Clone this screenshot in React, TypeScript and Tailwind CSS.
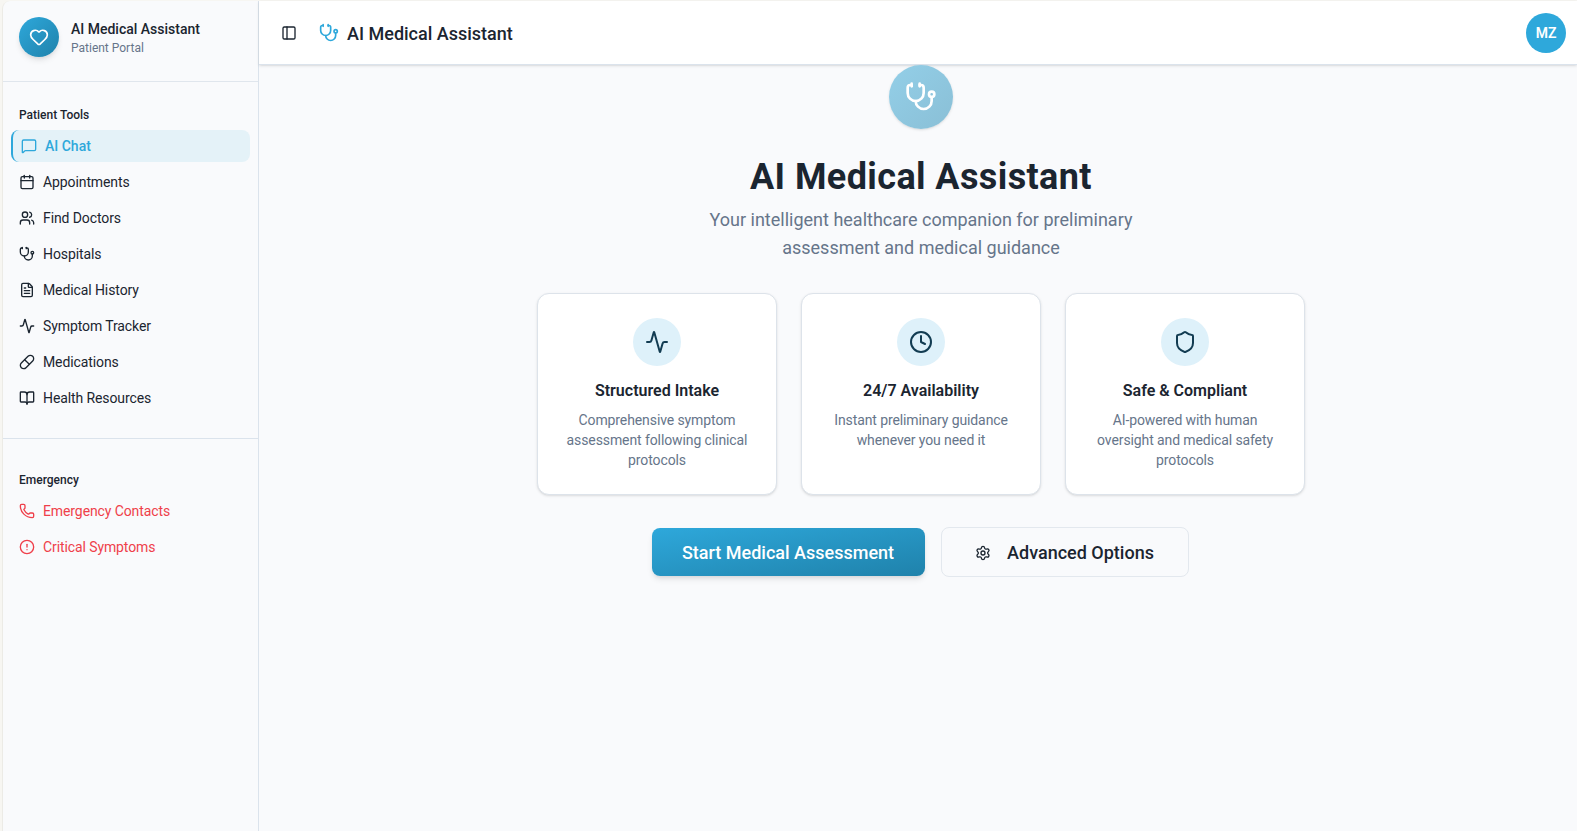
import React from "react"
import { Activity, BookOpen, Calendar, CircleAlert, Clock, FileText, Heart, MessageSquare, PanelLeft, Phone, Pill, Settings, Shield, Stethoscope, Users } from "lucide-react"

const tools = [
    { label: "Appointments", icon: Calendar },
    { label: "Find Doctors", icon: Users },
    { label: "Hospitals", icon: Stethoscope },
    { label: "Medical History", icon: FileText },
    { label: "Symptom Tracker", icon: Activity },
    { label: "Medications", icon: Pill },
    { label: "Health Resources", icon: BookOpen },
]

const emergency = [
    { label: "Emergency Contacts", icon: Phone },
    { label: "Critical Symptoms", icon: CircleAlert },
]

const features = [
    { title: "Structured Intake", text: "Comprehensive symptom assessment following clinical protocols", icon: Activity },
    { title: "24/7 Availability", text: "Instant preliminary guidance whenever you need it", icon: Clock },
    { title: "Safe & Compliant", text: "AI-powered with human oversight and medical safety protocols", icon: Shield },
]

const Sidebar = () => (
    <aside className="w-[257px] shrink-0 flex flex-col border-r border-[#dbe3ec] bg-[#f9fafc] border-l border-l-[#ecebe6] rounded-tl-lg">
        <div className="h-[81px] flex items-start gap-3 px-4 pt-4 border-b border-[#e0e6ed] shrink-0">
            <div className="w-10 h-10 rounded-full bg-gradient-to-br from-[#2ea8db] to-[#1f82ab] flex items-center justify-center shadow-md">
                <Heart size={20} className="text-white" />
            </div>
            <div className="pt-0.5">
                <p className="text-sm font-medium leading-5 text-[#1b2530]">AI Medical Assistant</p>
                <p className="mt-px text-xs leading-4 text-[#66758a]">Patient Portal</p>
            </div>
        </div>
        <div className="px-2 pt-[17px] h-[357px] border-b border-[#dbe3ec] shrink-0">
            <p className="h-[31px] px-2 flex items-center text-xs font-medium text-[#1b2530]">Patient Tools</p>
            <div className="flex flex-col gap-1">
                <a className="h-8 flex items-center gap-2 pl-2 rounded-lg border-l-2 border-[#2ea8db] bg-[#e4f2f8] text-sm font-medium text-[#2ea8db]">
                    <MessageSquare size={16} />
                    AI Chat
                </a>
                {tools.map((item) => (
                    <a key={item.label} className="h-8 flex items-center gap-2 px-2 text-sm tracking-[-0.1px] text-[#1b2530]">
                        <item.icon size={16} />
                        {item.label}
                    </a>
                ))}
            </div>
        </div>
        <div className="px-2 pt-[25px]">
            <p className="h-[31px] px-2 flex items-center text-xs font-medium text-[#1b2530]">Emergency</p>
            <div className="flex flex-col gap-1">
                {emergency.map((item) => (
                    <a key={item.label} className="h-8 flex items-center gap-2 px-2 text-sm tracking-[-0.1px] text-[#ef3f4a]">
                        <item.icon size={16} />
                        {item.label}
                    </a>
                ))}
            </div>
        </div>
    </aside>
)

const App = () => {
    return (
        <div className="h-screen flex overflow-hidden bg-[#f7f6f2] pl-[2px] pt-px text-[#1b2530] font-['Roboto',sans-serif]">
            <Sidebar />
            <div className="flex-1 flex flex-col min-w-0 bg-[#f9fafc]">
                <header className="h-[64px] shrink-0 flex items-center gap-4 px-[22px] bg-white border-b border-[#dbe3ec] shadow-sm">
                    <PanelLeft size={16} />
                    <div className="flex items-center gap-2 ml-[6px]">
                        <Stethoscope size={20} className="text-[#2ea8db]" />
                        <h2 className="pt-0.5 text-lg font-medium">AI Medical Assistant</h2>
                    </div>
                    <div className="ml-auto -mr-[11px] w-10 h-10 rounded-full bg-[#2ea8db] flex items-center justify-center text-sm font-semibold text-white">MZ</div>
                </header>
                <main className="flex-1 flex flex-col items-center pl-[6px]">
                    <div className="w-16 h-16 rounded-full bg-gradient-to-br from-[#93cfe8] to-[#8abfd6] flex items-center justify-center shadow-sm">
                        <Stethoscope size={32} className="text-white" />
                    </div>
                    <h1 className="mt-[28px] text-4xl font-bold leading-10 tracking-[0.4px] text-[#1b2530]">AI Medical Assistant</h1>
                    <p className="mt-[9px] max-w-[448px] text-center text-lg leading-7 text-[#66758a]">Your intelligent healthcare companion for preliminary assessment and medical guidance</p>
                    <div className="mt-[31px] grid grid-cols-3 gap-6 w-[768px]">
                        {features.map((f) => (
                            <div key={f.title} className="flex flex-col items-center p-6 rounded-xl border border-[#dde3ea] bg-white shadow-sm text-center">
                                <div className="w-12 h-12 rounded-full bg-[#def1fa] flex items-center justify-center text-[#123c52]">
                                    <f.icon size={24} />
                                </div>
                                <h3 className="mt-[13px] font-semibold leading-6">{f.title}</h3>
                                <p className="mt-[7px] text-sm leading-5 tracking-[-0.1px] text-[#66758a]">{f.text}</p>
                            </div>
                        ))}
                    </div>
                    <div className="mt-8 mr-[2px] flex items-center gap-4">
                        <button className="h-12 w-[273px] pt-px rounded-lg bg-gradient-to-br from-[#2ea8db] to-[#1f82ab] text-lg font-medium text-white shadow-md">Start Medical Assessment</button>
                        <button className="h-[50px] w-[248px] pt-px rounded-lg border border-[#e3e8ee] bg-[#f9fafc] flex items-center justify-center gap-4 text-lg font-medium">
                            <Settings size={16} />
                            Advanced Options
                        </button>
                    </div>
                </main>
            </div>
        </div>
    )
}

export default App
